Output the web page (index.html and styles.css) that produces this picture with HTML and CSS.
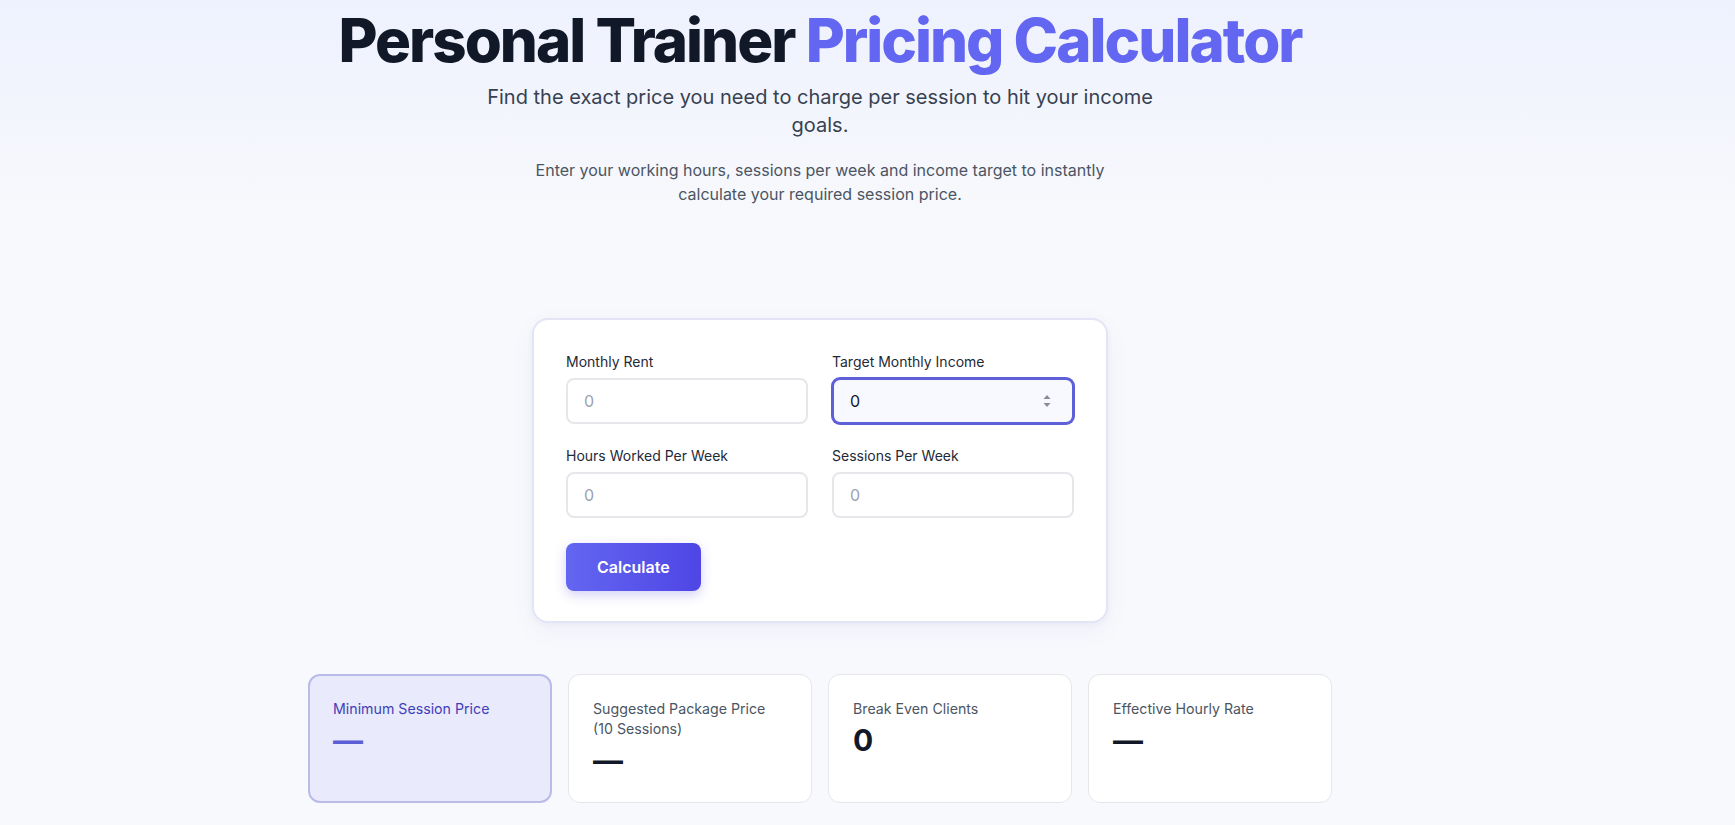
FILE: index.html
```html
<!DOCTYPE html>
<html lang="en">
<head>
<meta charset="utf-8">
<title>Personal Trainer Pricing Calculator</title>
<link rel="stylesheet" href="styles.css">
</head>
<body>
<div class="page">
  <header class="hero">
    <h1 class="title">Personal Trainer <span class="accent">Pricing Calculator</span></h1>
    <p class="subtitle">Find the exact price you need to charge per session to hit your income goals.</p>
    <p class="desc">Enter your working hours, sessions per week and income target to instantly calculate your required session price.</p>
  </header>

  <main class="main">
    <form class="calc-card">
      <div class="fields">
        <div class="field">
          <label class="label" for="rent">Monthly Rent</label>
          <input class="input" id="rent" type="text" placeholder="0">
        </div>
        <div class="field">
          <label class="label" for="income">Target Monthly Income</label>
          <div class="input-wrap">
            <input class="input input-focus" id="income" type="text" value="0">
            <svg class="spinner" width="8" height="14" viewBox="0 0 8 14" aria-hidden="true">
              <path d="M4 1 L7.5 5 L0.5 5 Z" fill="#8a8d94"/>
              <path d="M0.5 9 L7.5 9 L4 13 Z" fill="#8a8d94"/>
            </svg>
          </div>
        </div>
        <div class="field">
          <label class="label" for="hours">Hours Worked Per Week</label>
          <input class="input" id="hours" type="text" placeholder="0">
        </div>
        <div class="field">
          <label class="label" for="sessions">Sessions Per Week</label>
          <input class="input" id="sessions" type="text" placeholder="0">
        </div>
      </div>
      <button class="btn" type="button">Calculate</button>
    </form>

    <section class="results">
      <div class="result result-primary">
        <div class="r-label">Minimum Session Price</div>
        <div class="r-value">—</div>
      </div>
      <div class="result">
        <div class="r-label">Suggested Package Price (10&nbsp;Sessions)</div>
        <div class="r-value">—</div>
      </div>
      <div class="result">
        <div class="r-label">Break Even Clients</div>
        <div class="r-value">0</div>
      </div>
      <div class="result">
        <div class="r-label">Effective Hourly Rate</div>
        <div class="r-value">—</div>
      </div>
    </section>
  </main>
</div>
</body>
</html>
```

FILE: styles.css
```css
* { box-sizing: border-box; }

html, body {
  margin: 0;
  padding: 0;
}

body {
  font-family: Inter, "Noto Sans", "Liberation Sans", sans-serif;
  color: #111827;
  background: #f8f9fc;
  min-height: 825px;
}

.page {
  padding-right: 95px;
  background: linear-gradient(180deg, #eef2fe 0px, #f3f5fd 110px, #f8f9fc 220px, #f8f9fc 100%);
  min-height: 825px;
}

.hero {
  display: flex;
  flex-direction: column;
  align-items: center;
  text-align: center;
  padding-top: 7px;
}

.title {
  margin: 0;
  font-size: 60px;
  line-height: 66px;
  font-weight: 800;
  letter-spacing: -0.033em;
  color: #111827;
}

.accent { color: #6366f1; }

.subtitle {
  margin: 10px 0 0;
  max-width: 672px;
  font-size: 20px;
  line-height: 28px;
  color: #374151;
}

.desc {
  margin: 19px 0 0;
  max-width: 576px;
  font-size: 16px;
  line-height: 24px;
  color: #4b5563;
}

.main {
  display: flex;
  flex-direction: column;
  align-items: center;
  padding-top: 112px;
}

.calc-card {
  width: 576px;
  background: #ffffff;
  border: 2px solid #e3e4f6;
  border-radius: 16px;
  padding: 32px 32px 30px;
  box-shadow: 0 8px 24px rgba(99, 102, 241, 0.06), 0 2px 6px rgba(15, 23, 42, 0.04);
}

.fields {
  display: grid;
  grid-template-columns: 1fr 1fr;
  column-gap: 24px;
  row-gap: 22px;
}

.field {
  display: flex;
  flex-direction: column;
}

.label {
  font-size: 14px;
  line-height: 20px;
  font-weight: 400;
  color: #1f2937;
  margin-bottom: 6px;
}

.input-wrap { position: relative; }

.input {
  width: 100%;
  height: 46px;
  border: 2px solid #e5e7eb;
  border-radius: 8px;
  padding: 0 16px;
  font-family: inherit;
  font-size: 16px;
  color: #111827;
  background: #ffffff;
  outline: none;
}

.input::placeholder { color: #9ca3af; }

.input-focus {
  border-color: #5d60d6;
  box-shadow: 0 0 0 1px #5d60d6;
  background: #f8f9ff;
}

.spinner {
  position: absolute;
  right: 23px;
  top: 16px;
}

.btn {
  margin-top: 25px;
  height: 48px;
  padding: 0 31px;
  border: 0;
  border-radius: 8px;
  background: linear-gradient(90deg, #6366f1 0%, #4f46e5 100%);
  color: #ffffff;
  font-family: inherit;
  font-size: 16px;
  font-weight: 600;
  box-shadow: 0 4px 12px rgba(79, 70, 229, 0.25);
  cursor: pointer;
}

.results {
  margin-top: 51px;
  width: 1024px;
  display: grid;
  grid-template-columns: repeat(4, 1fr);
  gap: 16px;
}

.result {
  background: #ffffff;
  border: 1px solid #e5e7eb;
  border-radius: 12px;
  padding: 24px;
  min-height: 128px;
}

.result-primary {
  background: #e9eafb;
  border: 2px solid #b9bbe9;
  padding: 23px;
}

.r-label {
  font-size: 14.2px;
  line-height: 20px;
  color: #4b5563;
}

.r-value {
  margin-top: 3px;
  font-size: 30px;
  line-height: 36px;
  font-weight: 700;
  color: #111827;
}

.result-primary .r-label { color: #3f3fb8; }
.result-primary .r-value { color: #5b5fd6; }
```
